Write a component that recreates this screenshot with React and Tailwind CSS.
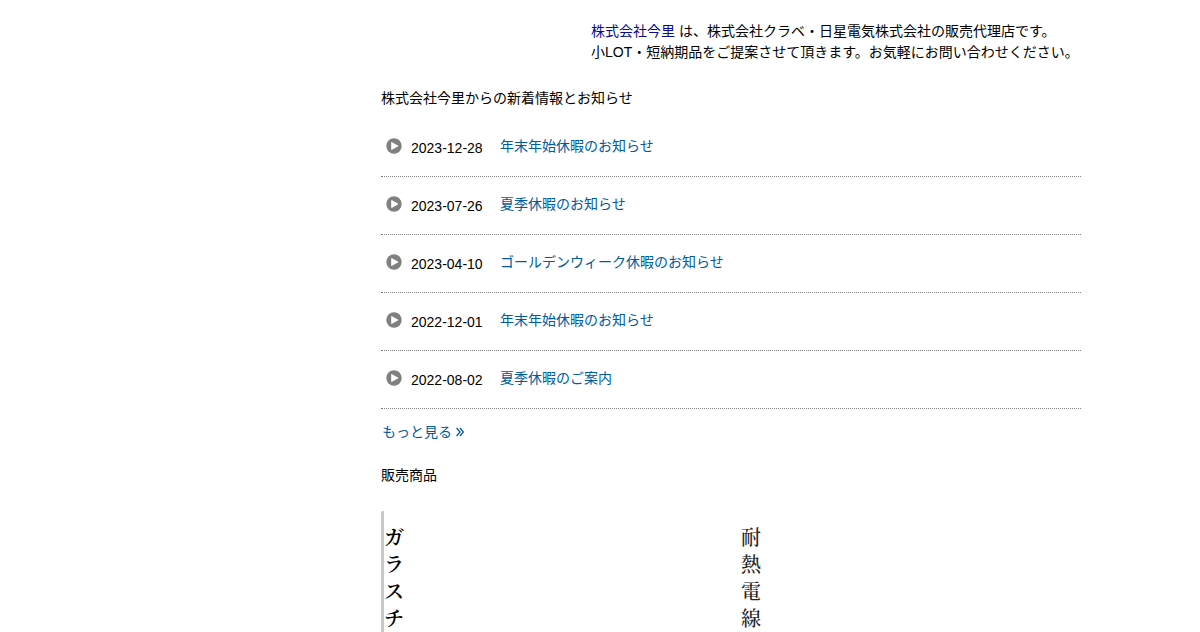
const news = [
  { id: 1, date: '2023-12-28', title: '年末年始休暇のお知らせ' },
  { id: 2, date: '2023-07-26', title: '夏季休暇のお知らせ' },
  { id: 3, date: '2023-04-10', title: 'ゴールデンウィーク休暇のお知らせ' },
  { id: 4, date: '2022-12-01', title: '年末年始休暇のお知らせ' },
  { id: 5, date: '2022-08-02', title: '夏季休暇のご案内' },
];

function PlayIcon() {
  return (
    <svg viewBox="0 0 16 16" className="w-4 h-4 shrink-0" aria-hidden="true">
      <circle cx="8" cy="8" r="7.7" fill="#808080" />
      <path d="M5.6 4.4v7.2L12 8z" fill="#fff" stroke="#fff" strokeWidth="0.8" strokeLinejoin="round" />
    </svg>
  );
}

function DoubleArrow() {
  return (
    <svg viewBox="0 0 8 10" className="w-2 h-[10px]" fill="none" stroke="currentColor" strokeWidth="1.3" aria-hidden="true">
      <path d="M0.6 1 4 5 0.6 9M4 1l3.4 4L4 9" />
    </svg>
  );
}

function App() {
  return (
    <div lang="ja" className="h-screen overflow-hidden bg-white text-black text-sm font-['Liberation_Sans','Noto_Sans_CJK_JP',sans-serif]">
      <div className="max-w-[962px] mx-auto flex justify-end">
        <main className="w-full max-w-[700px]">
          <p className="pt-[21px] pl-[210px] leading-[21px] whitespace-nowrap">
            <a href="#company" className="text-[#0a0a90]">株式会社今里</a> は、株式会社クラベ・日星電気株式会社の販売代理店です。
            <br />
            小LOT・短納期品をご提案させて頂きます。お気軽にお問い合わせください。
          </p>

          <h2 className="mt-[23px] leading-6">株式会社今里からの新着情報とお知らせ</h2>
          <ul className="mt-[9px]">
            {news.map(item => (
              <li key={item.id} className="h-[58px] flex items-center pl-[5px] pb-[3px] border-b border-dotted border-[#808080]">
                <PlayIcon />
                <time className="w-[89px] ml-[9px] pt-[3px]">{item.date}</time>
                <a href={`#news-${item.id}`} className="text-[#005b9f] hover:underline">{item.title}</a>
              </li>
            ))}
          </ul>
          <a href="#more" className="mt-[11px] ml-px inline-flex items-center gap-1 leading-6 text-[#005b9f] hover:underline">
            もっと見る
            <DoubleArrow />
          </a>

          <h2 className="mt-[19px] leading-6">販売商品</h2>
          <div className="mt-6 grid grid-cols-2 gap-5 text-xl leading-[27px] font-['Noto_Serif_CJK_JP','Noto_Serif_JP',serif]">
            <a href="#tube" className="pt-3 pb-3 border-l-3 border-[#c8c8c8] rounded-tl-xs">
              <span className="block w-5 break-all font-semibold">ガラスチ</span>
            </a>
            <a href="#wire" className="pt-3 pb-3 text-[#222]">
              <span className="block w-5 break-all font-medium">耐熱電線</span>
            </a>
          </div>
        </main>
      </div>
    </div>
  );
}

export default App;
